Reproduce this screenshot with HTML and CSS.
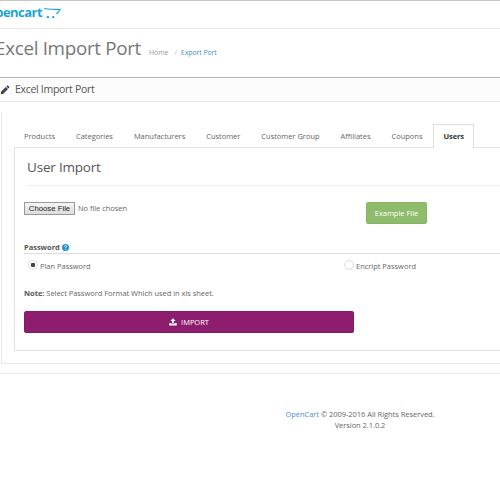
FILE: index.html
```html
<!DOCTYPE html>
<html lang="en">
<head>
<meta charset="utf-8">
<title>Excel Import Port</title>
<link rel="stylesheet" href="styles.css">
</head>
<body>
<header class="topbar">
  <span class="logo">opencart</span>
  <svg class="cart" width="18" height="12" viewBox="0 0 18 12"><path d="M.3 1.300C4 2.800 10 2.200 16.200 2.600C15.500 4.200 13.500 5.400 12.300 6.900" fill="none" stroke="#1ba4d8" stroke-width="1.100" stroke-linejoin="round"/><circle cx="3.900" cy="10.100" r="1.200" fill="#1ba4d8"/><circle cx="9.200" cy="10.100" r="1.200" fill="#1ba4d8"/></svg>
</header>
<div class="page-head">
  <h1>Excel Import Port</h1>
  <nav class="crumbs"><span>Home</span><span class="sep">/</span><a>Export Port</a></nav>
</div>
<div class="panel-head">
  <svg width="10" height="10" viewBox="0 0 10 10"><path d="M.7 9.200L1.200 6.500L5.800 1.900L8 4.100L3.400 8.700Z" fill="#444"/><path d="M6.300 1.400L7.200.6Q7.700.3 8.200.8L9.200 1.800Q9.600 2.300 9.200 2.800L8.500 3.600Z" fill="#444"/></svg>
  <h2>Excel Import Port</h2>
</div>
<main class="outer">
  <ul class="tabs">
    <li>Products</li><li>Categories</li><li>Manufacturers</li><li>Customer</li><li>Customer Group</li><li>Affiliates</li><li>Coupons</li><li class="active">Users</li>
  </ul>
  <section class="inner">
    <h3>User Import</h3>
    <div class="file-row">
      <div class="file"><button class="choose">Choose File</button><span>No file chosen</span></div>
      <button class="example">Example File</button>
    </div>
    <div class="legend"><b>Password</b><svg width="7" height="7" viewBox="0 0 7 7"><circle cx="3.500" cy="3.500" r="3.500" fill="#1e91cf"/><path d="M2.300 2.500Q2.500 1.500 3.500 1.500Q4.700 1.600 4.600 2.600Q4.400 3.200 3.600 3.500V4.300M3.600 4.900V5.700" fill="none" stroke="#fff" stroke-width=".9"/></svg></div>
    <div class="radios">
      <label><i class="radio on"></i><span>Plan Password</span></label>
      <label><i class="radio"></i><span>Encript Password</span></label>
    </div>
    <p class="note"><b>Note:</b> Select Password Format Which used in xls sheet.</p>
    <button class="import"><svg width="8" height="8" viewBox="0 0 8 8"><path d="M4 .2L6.600 3.100H4.900V5.400H3.100V3.100H1.400ZM.3 5H2.500V6H5.500V5H7.700V7.400H.3Z" fill="#fff"/></svg><span>IMPORT</span></button>
  </section>
</main>
<footer><div><a>OpenCart</a> © 2009-2016 All Rights Reserved.</div><div class="version">Version 2.1.0.2</div></footer>
</body>
</html>
```
FILE: styles.css
```css
* { box-sizing: border-box; }
body { margin: 0; width: 500px; height: 500px; overflow: hidden; background: #fff; color: #666; font: 7.5px/11px "Open Sans", sans-serif; letter-spacing: -.02px; }
h1, h2, h3, p, ul { margin: 0; padding: 0; font-weight: 400; }
button { font: inherit; letter-spacing: inherit; padding: 0; border: 0; white-space: nowrap; }
svg { display: block; flex: none; }
a { color: #4b8fd0; }

.topbar { height: 29px; border-top: 1px solid #c6c6c6; border-bottom: 1px solid #e8e8e8; display: flex; }
.logo { width: 42px; flex: none; display: flex; justify-content: flex-end; font: 700 13px/22px "Open Sans", sans-serif; color: #1ba4d8; letter-spacing: -.55px; }
.cart { margin: 6px 0 0 2px; }

.page-head { height: 48px; display: flex; white-space: nowrap; }
h1 { width: 141px; display: flex; justify-content: flex-end; flex: none; font-size: 18.800px; line-height: 39px; letter-spacing: -.3px; color: #777; }
.crumbs { display: flex; margin: 18px 0 0 8px; font-size: 7px; letter-spacing: -.1px; color: #999; }
.sep { margin: 0 4px 0 6px; color: #bbb; }

.panel-head { height: 25px; border-top: 1px solid #b9b9b9; border-bottom: 1px solid #e8e8e8; background: #fcfcfc; display: flex; padding-top: 7px; }
h2 { font-size: 10.500px; line-height: 9px; letter-spacing: -.3px; margin-left: 5px; color: #555; }

.outer { margin: 10px 0 0 1px; height: 252px; border-left: 1px solid #e8e8e8; border-bottom: 1px solid #e8e8e8; padding: 12px 0 0 12px; }
.tabs { display: flex; list-style: none; height: 23px; position: relative; }
.tabs li { height: 24px; padding: 0 10px; margin-right: 1px; line-height: 24px; white-space: nowrap; }
.tabs .active { width: 41px; border: 1px solid #ddd; border-bottom: 0; background: #fff; font-weight: 700; color: #333; padding: 0 9px; line-height: 22px; letter-spacing: -.08px; }
.inner { height: 204px; border: 1px solid #e2e2e2; border-right: 0; padding: 0 0 0 9px; }
h3 { margin-left: 3px; height: 38px; font-size: 13.500px; line-height: 38px; letter-spacing: -.2px; color: #555; border-bottom: 1px solid #eee; }
.file-row { display: flex; height: 56px; padding-top: 16px; }
.file { width: 342px; display: flex; }
.choose { width: 51px; height: 13px; border: 1px solid #999; background: linear-gradient(#f5f5f5, #ddd); color: #222; font: 7.800px/11px "Liberation Sans", sans-serif; margin-right: 3px; }
.file span { line-height: 13px; letter-spacing: -.05px; }
.example { width: 61px; height: 22px; border: 1px solid #86b862; border-radius: 2px; background: #8fbb6c; color: #fff; }
.legend { height: 12px; border-bottom: 1px solid #ddd; display: flex; gap: 2px; color: #555; }
.legend b { line-height: 11px; }
.legend svg { margin-top: 2px; }
.radios { display: flex; height: 33px; padding-top: 6px; }
.radios label { display: flex; width: 316px; padding-left: 4px; }
.radios label + label { width: auto; }
.radio { width: 10px; height: 10px; border: 1px solid #ddd; border-radius: 50%; flex: none; margin-right: 2px; }
.radio.on { background: radial-gradient(circle, #444 0 2px, #fff 2.600px); }
.radios span { line-height: 13px; white-space: nowrap; }
.note { height: 24px; line-height: 12px; letter-spacing: -.035px; }
.note b { color: #555; }
.import { width: 330px; height: 22px; border: 1px solid #851b68; border-radius: 2px; background: #8f1d6f; color: #fff; display: flex; align-items: center; justify-content: center; gap: 4px; line-height: 10px; }
.import span { margin-top: -1px; }
footer { margin-top: 9px; border-top: 1px solid #e8e8e8; padding: 35px 0 0 220px; width: 500px; text-align: center; line-height: 11px; letter-spacing: -.04px; }
```
